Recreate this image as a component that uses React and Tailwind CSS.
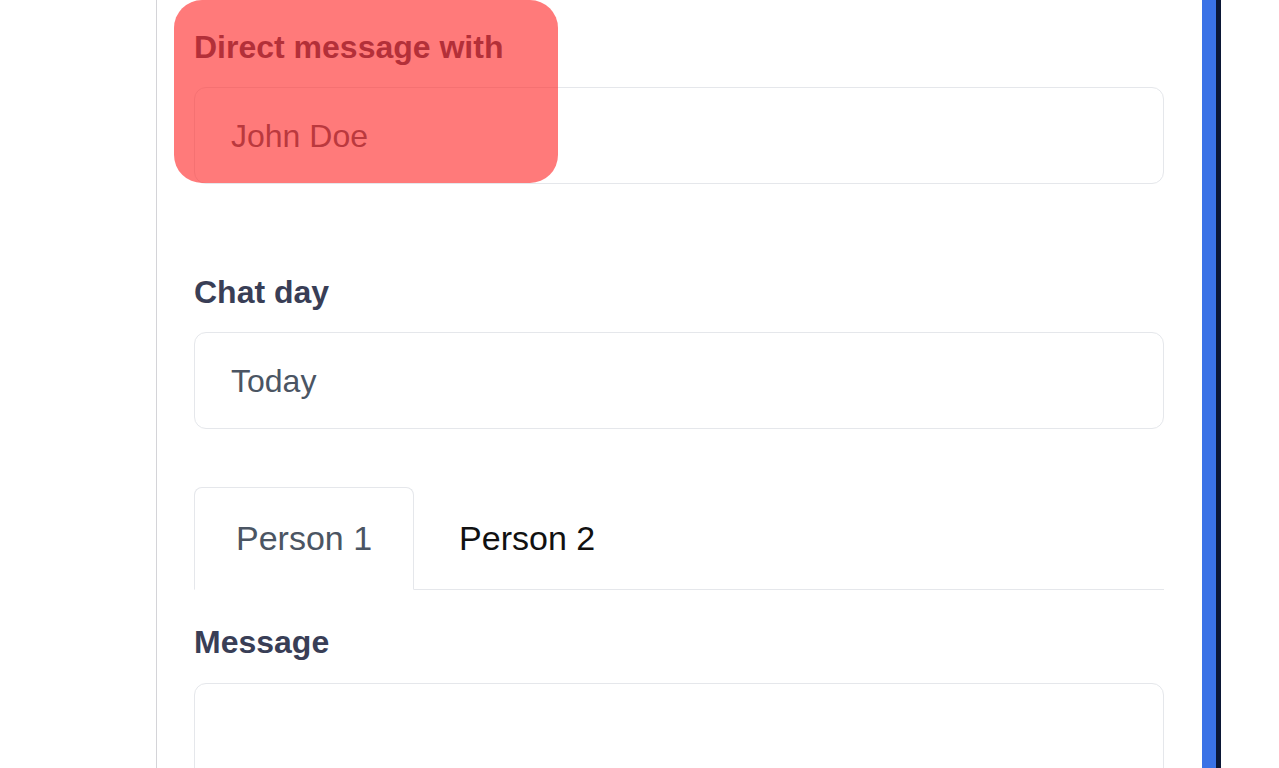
import React, { useState } from 'react';

const Field = ({ label, value, className = '' }) => (
  <div className={className}>
    <label className="block text-[32px] leading-[48px] font-bold text-[#393e56]">{label}</label>
    <div className="mt-[16px] h-[97px] flex items-center px-[36px] border border-[#e5e7eb] rounded-[12px] text-[32px] text-[#4b5563] bg-white">
      {value}
    </div>
  </div>
);

const App = () => {
  const [tab, setTab] = useState(1);

  return (
    <div className="relative w-[1279px] h-[768px] overflow-hidden bg-white" style={{ fontFamily: '"Liberation Sans", Arial, sans-serif' }}>
      <div className="flex h-full">
        <div className="w-[156px] shrink-0" />
        <div className="w-[1046px] shrink-0 border-l border-[#d4d4d8] pl-[37px] pr-[38px] pt-[23px]">
          <Field label="Direct message with" value="John Doe" />
          <Field label="Chat day" value="Today" className="mt-[84px]" />

          <div className="mt-[58px] flex items-end border-b border-[#e5e7eb]">
            <button
              onClick={() => setTab(1)}
              className="-mb-px h-[103px] px-[41px] border border-b-white border-[#e5e7eb] rounded-t-[8px] bg-white text-[34px] text-[#4b5563]"
            >
              Person 1
            </button>
            <button
              onClick={() => setTab(2)}
              className="h-[102px] px-[45px] text-[34px] text-[#111111]"
            >
              Person 2
            </button>
          </div>

          <label className="block mt-[28px] text-[32px] leading-[48px] font-bold text-[#393e56]">Message</label>
          <div className="mt-[17px] h-[160px] border border-[#e5e7eb] rounded-[12px]" />
          {tab === 2 && null}
        </div>
        <div className="w-[14px] shrink-0 bg-[#3a72e6]" />
        <div className="w-[5px] shrink-0 bg-[#0b1736]" />
      </div>

      {/* highlight overlay */}
      <div className="absolute left-[174px] top-0 w-[384px] h-[183px] rounded-[28px] bg-[rgba(255,40,40,0.62)] pointer-events-none" />
    </div>
  );
};

export default App;
